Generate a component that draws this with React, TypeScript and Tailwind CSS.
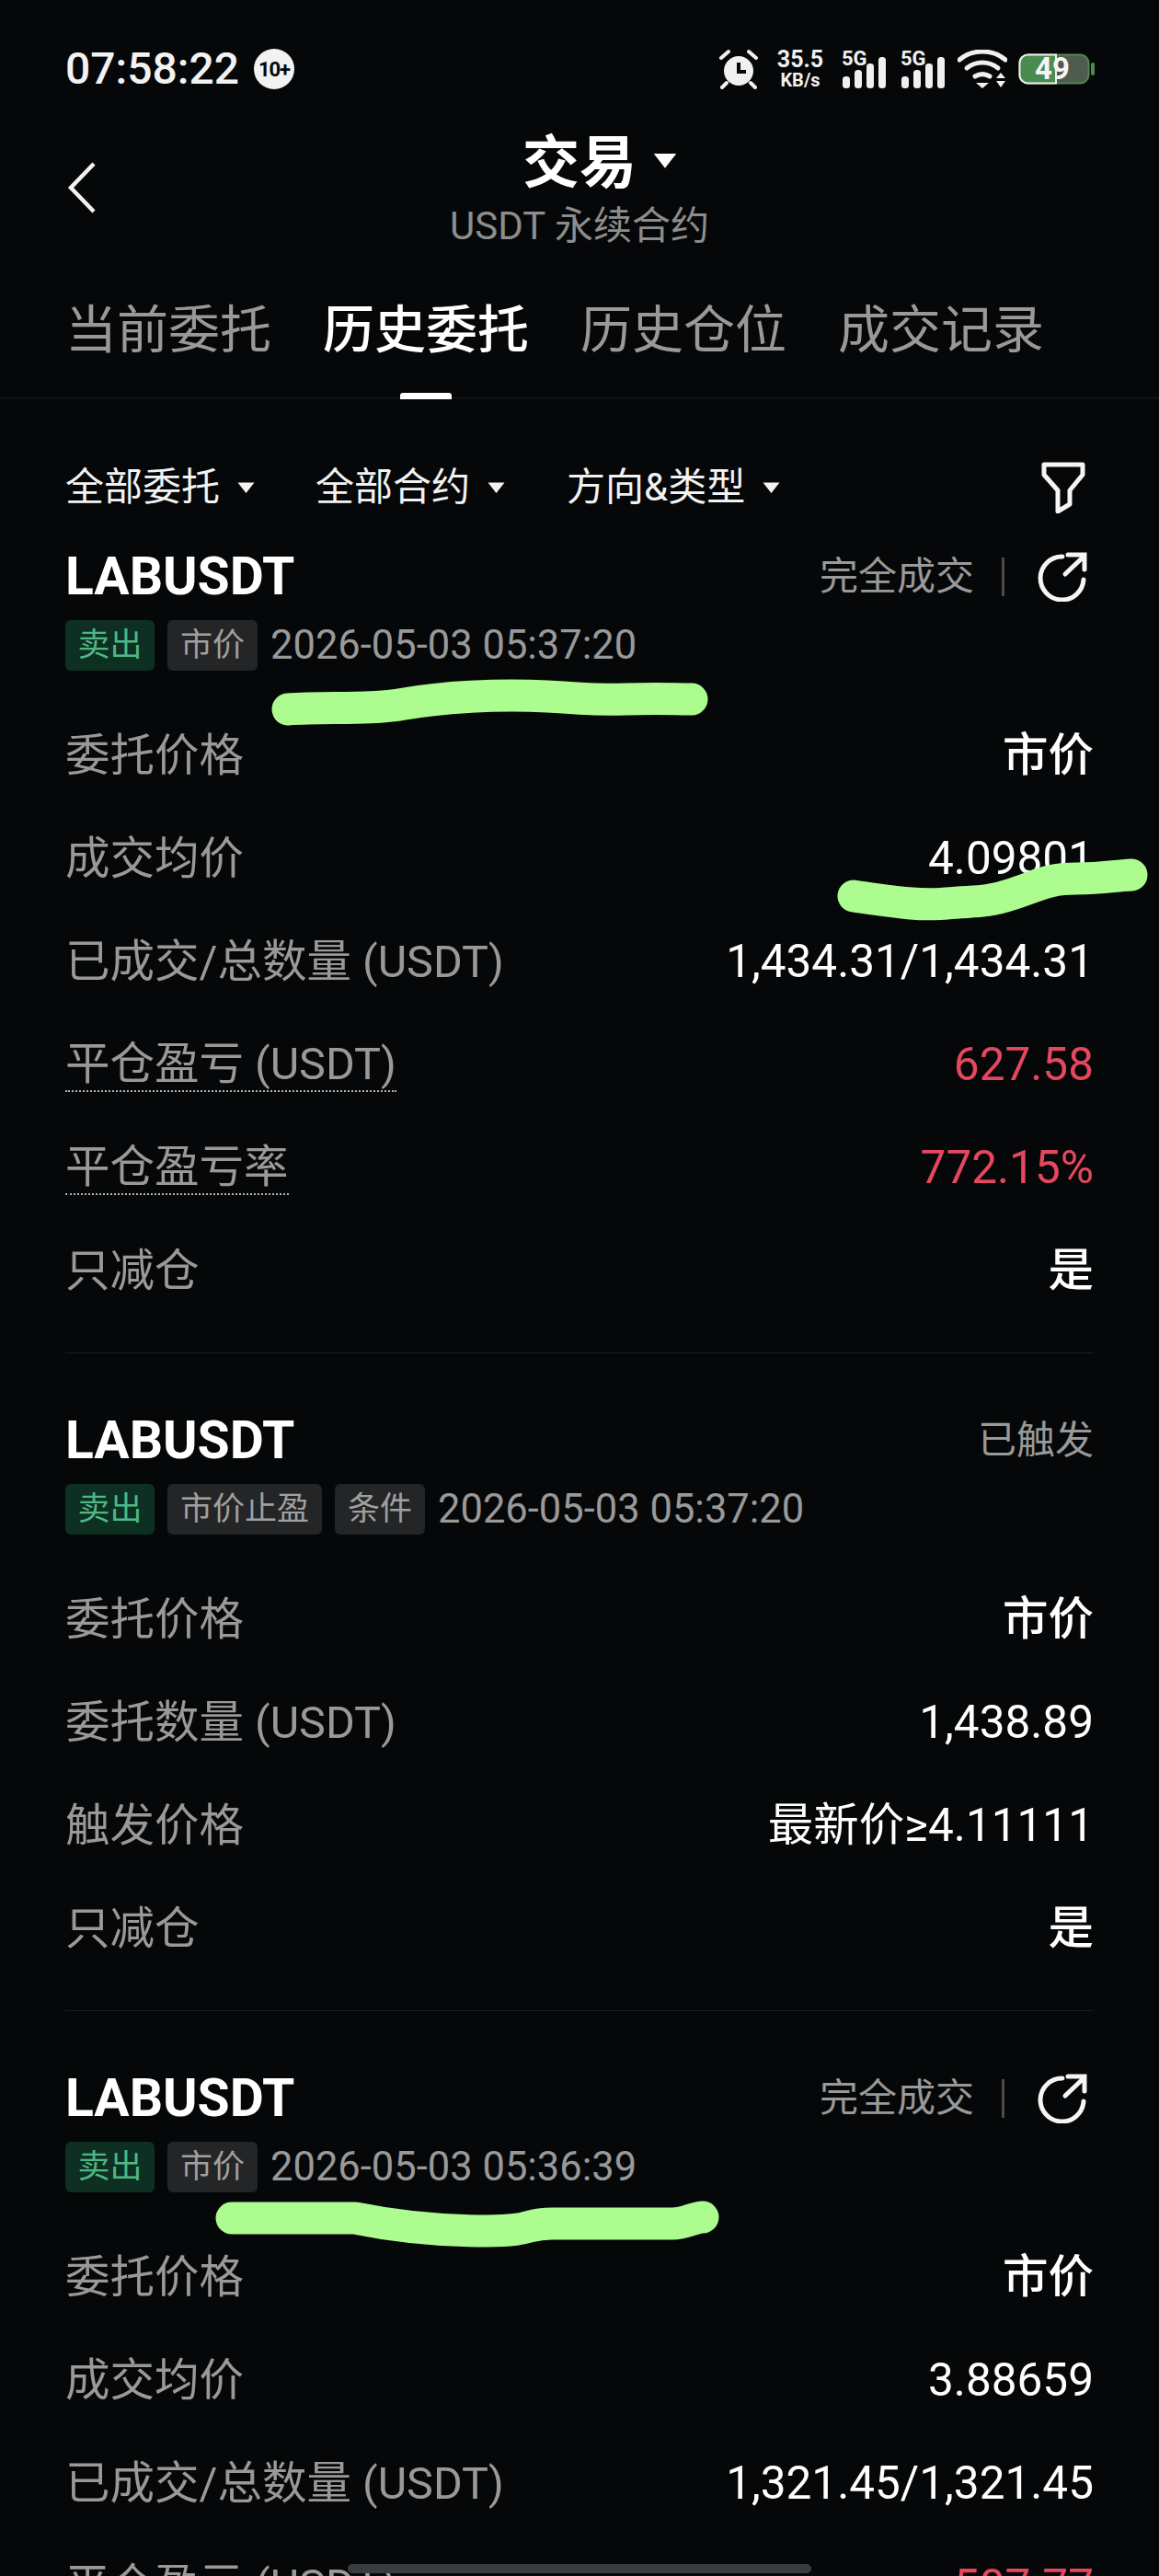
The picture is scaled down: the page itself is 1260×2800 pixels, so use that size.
const FONT = "[font-family:Roboto,'Noto_Sans_CJK_SC',sans-serif]";

type Row = { label: string; value: string; dotted?: boolean; red?: boolean };
type Order = {
  status: string;
  share?: boolean;
  chips: string[];
  time: string;
  rows: Row[];
  topClass: string;
};

const TABS = ["当前委托", "历史委托", "历史仓位", "成交记录"];
const FILTERS = [
  { label: "全部委托", className: "w-[272px]" },
  { label: "全部合约", className: "w-[273px]" },
  { label: "方向&类型", className: "" },
];

const ORDERS: Order[] = [
  {
    status: "完全成交",
    share: true,
    chips: ["市价"],
    time: "2026-05-03 05:37:20",
    topClass: "pt-[1px]",
    rows: [
      { label: "委托价格", value: "市价" },
      { label: "成交均价", value: "4.09801" },
      { label: "已成交/总数量 (USDT)", value: "1,434.31/1,434.31" },
      { label: "平仓盈亏 (USDT)", value: "627.58", dotted: true, red: true },
      { label: "平仓盈亏率", value: "772.15%", dotted: true, red: true },
      { label: "只减仓", value: "是" },
    ],
  },
  {
    status: "已触发",
    chips: ["市价止盈", "条件"],
    time: "2026-05-03 05:37:20",
    topClass: "pt-[47px]",
    rows: [
      { label: "委托价格", value: "市价" },
      { label: "委托数量 (USDT)", value: "1,438.89" },
      { label: "触发价格", value: "最新价≥4.11111" },
      { label: "只减仓", value: "是" },
    ],
  },
  {
    status: "完全成交",
    share: true,
    chips: ["市价"],
    time: "2026-05-03 05:36:39",
    topClass: "pt-[47px]",
    rows: [
      { label: "委托价格", value: "市价" },
      { label: "成交均价", value: "3.88659" },
      { label: "已成交/总数量 (USDT)", value: "1,321.45/1,321.45" },
      { label: "平仓盈亏 (USDT)", value: "507.77", dotted: true, red: true },
    ],
  },
];

function Caret({ className }: { className: string }) {
  return (
    <svg viewBox="0 0 20 14" className={className} fill="currentColor">
      <path d="M1 1.5h18L10 13z" />
    </svg>
  );
}

function Signal() {
  return (
    <div className="relative h-[42px] w-[50px]">
      <span className="absolute left-0 top-0 text-[22px] font-bold leading-[20px] text-[#f0f0f0]">5G</span>
      <svg viewBox="0 0 50 42" className="h-full w-full" fill="#f0f0f0">
        <rect x="1" y="29" width="8" height="13" rx="3.5" />
        <rect x="14" y="22" width="8" height="20" rx="3.5" />
        <rect x="27" y="15" width="8" height="27" rx="3.5" />
        <rect x="40" y="8" width="8" height="34" rx="3.5" />
      </svg>
    </div>
  );
}

function StatusBar() {
  return (
    <div className="flex h-[150px] items-center justify-between pl-[71px] pr-[70px]">
      <div className="flex items-center gap-[16px]">
        <span className="text-[48px] font-medium leading-none text-[#f2f2f2]">07:58:22</span>
        <span className="flex h-[44px] w-[44px] items-center justify-center rounded-full bg-[#f2f2f2] text-[22px] font-bold tracking-[-1px] text-[#060708]">
          10+
        </span>
      </div>
      <div className="flex items-center">
        <svg viewBox="0 0 44 44" className="h-[44px] w-[44px]" fill="none">
          <circle cx="22" cy="24" r="16" fill="#f0f0f0" />
          <path d="M22 15v10h8" stroke="#060708" strokeWidth="4" />
          <path d="M3 10l8-7M41 10l-8-7M9 37l-5 5M35 37l5 5" stroke="#f0f0f0" strokeWidth="4" strokeLinecap="round" />
        </svg>
        <div className="ml-[18px] flex w-[54px] flex-col items-center font-bold text-[#f0f0f0]">
          <span className="text-[25px] leading-[24px]">35.5</span>
          <span className="text-[20px] leading-[20px]">KB/s</span>
        </div>
        <div className="ml-[18px]">
          <Signal />
        </div>
        <div className="ml-[14px]">
          <Signal />
        </div>
        <svg viewBox="0 0 54 42" className="ml-[12px] h-[42px] w-[54px]" fill="none">
          <path d="M2 11C16-1 38-1 52 11" stroke="#f0f0f0" strokeWidth="5" strokeLinecap="round" />
          <path d="M10 20c10-8 24-8 34 0" stroke="#f0f0f0" strokeWidth="5" strokeLinecap="round" />
          <path d="M19 29c5-3 11-3 16 0" stroke="#f0f0f0" strokeWidth="5" strokeLinecap="round" />
          <path d="M20 36h14l-7 6zM42 31l5-6 5 6zM42 34h10l-5 7z" fill="#f0f0f0" />
        </svg>
        <div className="relative ml-[12px] h-[34px] w-[83px]">
          <svg viewBox="0 0 83 34" className="h-full w-full">
            <rect x="1.5" y="1.5" width="75" height="31" rx="9" fill="#4f5a50" stroke="#4f8a50" strokeWidth="2" />
            <path d="M41 1.5H11a9 9 0 0 0-9.500 9v13a9 9 0 0 0 9.500 9h30z" fill="#4b8b50" stroke="#f0f0f0" strokeWidth="2" />
            <rect x="79" y="10" width="4" height="14" rx="2" fill="#4f8a50" />
          </svg>
          <span className="absolute left-[18px] top-0 text-[33px] font-bold leading-[34px] text-[#f5f5f5]">49</span>
        </div>
      </div>
    </div>
  );
}

function Header() {
  return (
    <div className="relative h-[132px]">
      <svg viewBox="0 0 32 56" className="absolute left-[73px] top-[26px] h-[56px] w-[32px]" fill="none" stroke="#f2f2f2" strokeWidth="4.5">
        <path d="M29 2L4 28l25 26" />
      </svg>
      <div className="flex h-[56px] items-center justify-center">
        <span className="relative text-[62px] font-bold leading-none text-white">
          交易
          <Caret className="absolute left-[calc(100%+17px)] top-[18px] h-[19px] w-[28px] text-white" />
        </span>
      </div>
      <div className="mt-[19px] text-center text-[42px] leading-[42px] text-[#8d8d8d]">USDT 永续合约</div>
    </div>
  );
}

function Tabs() {
  return (
    <div className="flex h-[151px] items-center gap-[56px] border-b border-[#1c1d1e] pl-[71px] pt-[3px]">
      {TABS.map((tab) => (
        <div
          key={tab}
          className={`relative text-[56px] leading-none ${tab === "历史委托" ? "font-medium text-white" : "text-[#999999]"}`}
        >
          {tab}
          {tab === "历史委托" && (
            <span className="absolute bottom-[-47px] left-1/2 h-[7px] w-[56px] -translate-x-1/2 rounded-t-[3px] bg-white" />
          )}
        </div>
      ))}
    </div>
  );
}

function FilterBar() {
  return (
    <div className="mt-[49px] flex h-[96px] items-center justify-between pl-[71px] pr-[80px]">
      <div className="flex items-center">
        {FILTERS.map((f) => (
          <div key={f.label} className={`flex items-center gap-[18px] ${f.className}`}>
            <span className="text-[42px] leading-none text-[#f2f2f2]">{f.label}</span>
            <Caret className="h-[14px] w-[21px] text-[#f2f2f2]" />
          </div>
        ))}
      </div>
      <svg viewBox="0 0 48 56" className="h-[56px] w-[48px]" fill="none" stroke="#f5f5f5" strokeWidth="5" strokeLinejoin="round">
        <path d="M3 3h42v11L31 31v15l-13 8V31L3 14z" />
      </svg>
    </div>
  );
}

function ShareIcon() {
  return (
    <svg viewBox="0 0 54 54" className="ml-[36px] mr-[7px] h-[54px] w-[54px]" fill="none" stroke="#f5f5f5" strokeWidth="5" strokeLinecap="round">
      <path d="M27 5A23.500 23.500 0 1 0 50 30" />
      <path d="M30 24L50 5M33 3h18v16" />
    </svg>
  );
}

function OrderRow({ row }: { row: Row }) {
  const numeric = /\d/.test(row.value);
  return (
    <div className="flex h-[112px] items-center justify-between">
      <span
        className={`text-[48.5px] leading-[56px] text-[#999999] ${row.dotted ? "border-b-2 border-dotted border-[#b5b5b5]" : ""}`}
      >
        {row.label}
      </span>
      <span
        className={`text-[49.5px] leading-none ${numeric ? "font-normal" : "font-medium"} ${row.red ? "text-[#e5475f]" : "text-white"}`}
      >
        {row.value}
      </span>
    </div>
  );
}

function OrderCard({ order, last }: { order: Order; last: boolean }) {
  return (
    <div className={`${order.topClass} ${last ? "" : "border-b border-[#1c1d1e] pb-[32px]"}`}>
      <div className="flex h-[95px] items-center justify-between">
        <span className="text-[57px] font-bold leading-none text-white">LABUSDT</span>
        <div className="flex items-center">
          <span className="text-[42px] leading-none text-[#999999]">{order.status}</span>
          {order.share && (
            <>
              <span className="ml-[30px] h-[42px] w-[3px] bg-[#4b4b4b]" />
              <ShareIcon />
            </>
          )}
        </div>
      </div>
      <div className="flex items-center gap-[14px]">
        <span className="flex h-[55px] w-[97px] items-center justify-center rounded-[6px] bg-[#0e3023] text-[35px] leading-none text-[#4fb882]">
          卖出
        </span>
        {order.chips.map((chip) => (
          <span
            key={chip}
            className="flex h-[55px] items-center justify-center rounded-[6px] bg-[#242526] px-[14px] text-[35px] leading-none text-[#a0a0a0]"
          >
            {chip}
          </span>
        ))}
        <span className="text-[43.500px] leading-none text-[#999999]">{order.time}</span>
      </div>
      <div className="mt-[37px]">
        {order.rows.map((row) => (
          <OrderRow key={row.label} row={row} />
        ))}
      </div>
    </div>
  );
}

export default function App() {
  return (
    <div className={`relative h-[2800px] w-[1260px] overflow-hidden bg-[#060708] ${FONT}`}>
      <StatusBar />
      <Header />
      <Tabs />
      <FilterBar />
      <div className="px-[71px]">
        {ORDERS.map((order, i) => (
          <OrderCard key={i} order={order} last={i === ORDERS.length - 1} />
        ))}
      </div>

      {/* marker scribbles drawn over the screenshot */}
      <svg viewBox="0 0 1260 2800" className="absolute left-0 top-0 h-[2800px] w-[1260px]" fill="none" stroke="#adfc8f" strokeWidth="35" strokeLinecap="round" strokeLinejoin="round">
        <path d="M313 771C360 768 400 772 440 765S540 754 595 757 640 761 680 760 730 760 752 760" />
        <path d="M928 974C970 980 1000 985 1029 982S1070 982 1100 972 1140 955 1170 955 1210 952 1230 951" />
        <path d="M252 2411H386C430 2420 480 2425 530 2425S570 2417 600 2417H731C745 2417 755 2410 764 2410" />
      </svg>

      <div className="absolute left-[378px] top-[2787px] h-[10px] w-[504px] rounded-full bg-[#3b3c3d]" />
    </div>
  );
}
